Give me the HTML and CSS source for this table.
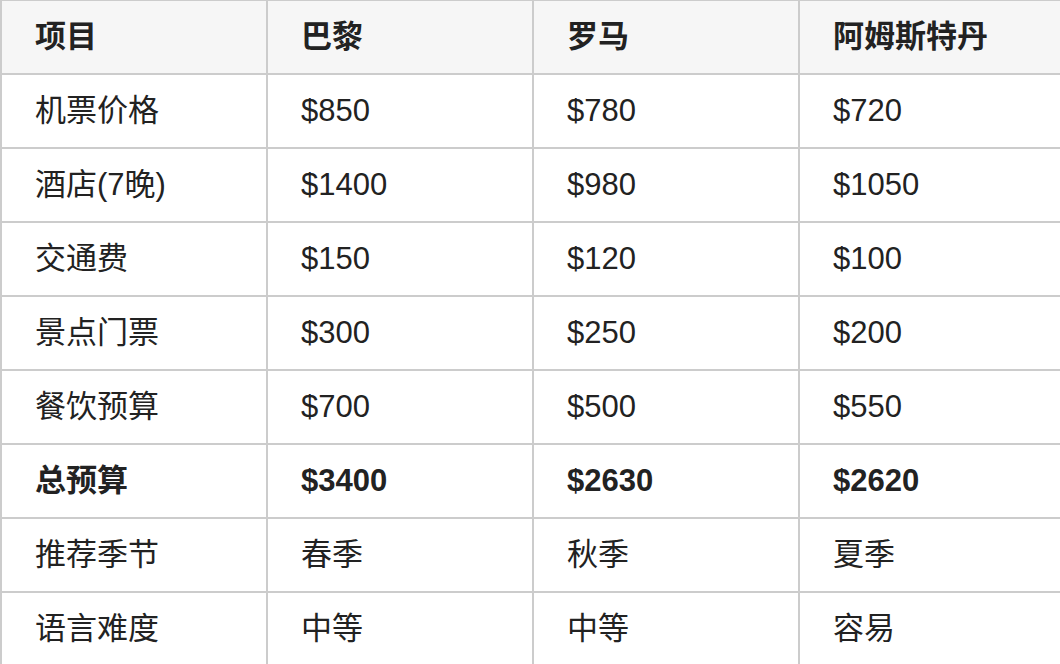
FILE: index.html
```html
<!DOCTYPE html>
<html lang="zh">
<head>
<meta charset="utf-8">
<link rel="stylesheet" href="styles.css">
</head>
<body>
<div class="wrap">
<table class="budget">
  <thead>
    <tr><th>项目</th><th>巴黎</th><th>罗马</th><th>阿姆斯特丹</th></tr>
  </thead>
  <tbody>
    <tr><td>机票价格</td><td>$850</td><td>$780</td><td>$720</td></tr>
    <tr><td>酒店(7晚)</td><td>$1400</td><td>$980</td><td>$1050</td></tr>
    <tr><td>交通费</td><td>$150</td><td>$120</td><td>$100</td></tr>
    <tr><td>景点门票</td><td>$300</td><td>$250</td><td>$200</td></tr>
    <tr><td>餐饮预算</td><td>$700</td><td>$500</td><td>$550</td></tr>
    <tr class="total"><td>总预算</td><td>$3400</td><td>$2630</td><td>$2620</td></tr>
    <tr><td>推荐季节</td><td>春季</td><td>秋季</td><td>夏季</td></tr>
    <tr><td>语言难度</td><td>中等</td><td>中等</td><td>容易</td></tr>
  </tbody>
</table>
</div>
</body>
</html>
```
FILE: styles.css
```css
html, body {
  margin: 0;
  padding: 0;
  background: #ffffff;
}
.wrap {
  width: 1060px;
  height: 664px;
  overflow: hidden;
}
.budget {
  border-collapse: collapse;
  table-layout: fixed;
  width: 1066px;
  margin-top: -1px;
  font-family: "Liberation Sans", "Noto Sans CJK SC", sans-serif;
  font-size: 31px;
  color: #222222;
}
.budget th,
.budget td {
  border: 2px solid #cccccc;
  height: 74px;
  padding: 0 0 0 33px;
  box-sizing: border-box;
  text-align: left;
  vertical-align: middle;
  white-space: nowrap;
  line-height: 36px;
}
.budget th {
  background: #f6f6f6;
  font-weight: 700;
}
.budget td {
  font-weight: 400;
}
.budget .total td {
  font-weight: 700;
}
```
